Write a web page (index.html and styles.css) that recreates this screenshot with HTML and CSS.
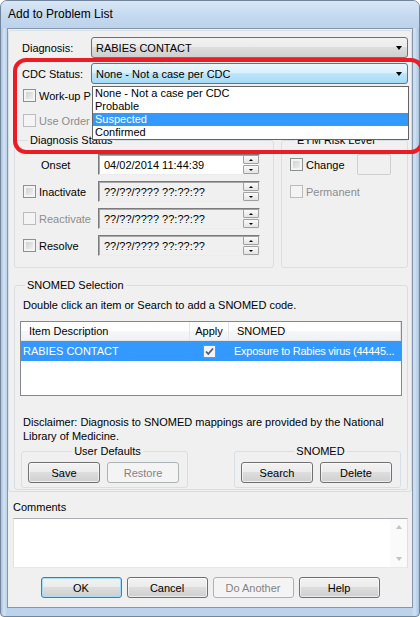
FILE: index.html
```html
<!doctype html>
<html>
<head>
	<meta charset="utf-8">
	<title>Add to Problem List</title>
	<link rel="stylesheet" href="styles.css">
</head>
<body>
<div class="window">
	<div class="titlebar">Add to Problem List</div>

	<div class="client">
		<div class="main-group">
			<div class="field-row">
				<label>Diagnosis:</label>
				<div class="combo"><span>RABIES CONTACT</span><i class="arrow"></i></div>
			</div>
			<div class="field-row">
				<label>CDC Status:</label>
				<div class="combo hot"><span>None - Not a case per CDC</span><i class="arrow"></i></div>
			</div>

			<div class="check-row"><span class="check"></span><span class="cut">Work-up P</span></div>
			<div class="check-row second disabled"><span class="check"></span><span class="cut">Use Order</span></div>

			<div class="status-groups">
				<fieldset class="group status">
					<legend>Diagnosis Status</legend>
					<div class="date-row">
						<span class="date-label plain">Onset</span>
						<div class="datebox active">04/02/2014 11:44:39<span class="spin"><span class="up"></span><span class="down"></span></span></div>
					</div>
					<div class="date-row">
						<span class="date-label"><span class="check"></span>Inactivate</span>
						<div class="datebox">??/??/???? ??:??:??<span class="spin"><span class="up"></span><span class="down"></span></span></div>
					</div>
					<div class="date-row">
						<span class="date-label disabled"><span class="check"></span>Reactivate</span>
						<div class="datebox">??/??/???? ??:??:??<span class="spin"><span class="up"></span><span class="down"></span></span></div>
					</div>
					<div class="date-row">
						<span class="date-label"><span class="check"></span>Resolve</span>
						<div class="datebox">??/??/???? ??:??:??<span class="spin"><span class="up"></span><span class="down"></span></span></div>
					</div>
				</fieldset>

				<fieldset class="group risk">
					<legend>EYM Risk Level</legend>
					<div class="risk-row">
						<span class="date-label"><span class="check"></span>Change</span>
						<span class="small-box"></span>
					</div>
					<div class="risk-row">
						<span class="date-label disabled"><span class="check"></span>Permanent</span>
					</div>
				</fieldset>
			</div>

			<fieldset class="group snomed">
				<legend>SNOMED Selection</legend>
				<p class="hint">Double click an item or Search to add a SNOMED code.</p>

				<div class="listview">
					<div class="lv-head">
						<span>Item Description</span>
						<span class="center">Apply</span>
						<span>SNOMED</span>
					</div>
					<div class="lv-row">
						<span class="first">RABIES CONTACT</span>
						<span class="center"><span class="check checked"><svg width="11" height="11" viewBox="0 0 11 11"><path d="M2 5.5 L4.3 8 L9 2.5" fill="none" stroke="#4d5c73" stroke-width="1.8"/></svg></span></span>
						<span class="last">Exposure to Rabies virus (44445...</span>
					</div>
				</div>

				<p class="disclaimer">Disclaimer: Diagnosis to SNOMED mappings are provided by the National Library of Medicine.</p>

				<div class="sub-groups">
					<fieldset class="group sub">
						<legend>User Defaults</legend>
						<div class="sub-buttons">
							<button class="btn">Save</button>
							<button class="btn" disabled>Restore</button>
						</div>
					</fieldset>
					<fieldset class="group sub">
						<legend>SNOMED</legend>
						<div class="sub-buttons">
							<button class="btn">Search</button>
							<button class="btn">Delete</button>
						</div>
					</fieldset>
				</div>
			</fieldset>
		</div>

		<div class="comments">
			<label>Comments</label>
			<div class="memo">
				<span class="memo-text"></span>
				<span class="scroll"><i class="s-up"></i><i class="s-down"></i></span>
			</div>
		</div>

		<div class="buttons">
			<button class="btn wide default">OK</button>
			<button class="btn wide">Cancel</button>
			<button class="btn wide" disabled>Do Another</button>
			<button class="btn wide">Help</button>
		</div>
	</div>

	<!-- open list of the CDC Status combo -->
	<ul class="dropdown">
		<li>None - Not a case per CDC</li>
		<li>Probable</li>
		<li class="selected">Suspected</li>
		<li>Confirmed</li>
	</ul>

	<!-- red highlight drawn over the screenshot -->
	<div class="callout"></div>
</div>
</body>
</html>
```

FILE: styles.css
```css
body {
	margin: 0;
	font-family: "Liberation Sans", Arial, sans-serif;
	font-size: 11px;
	color: #000;
	background: #fff;
}
p {
	margin: 0;
}
button {
	font-family: inherit;
	font-size: 11px;
	font-weight: normal;
}
.window {
	position: relative;
	width: 420px;
	height: 617px;
	box-sizing: border-box;
	padding: 0 6px 8px 6px;
	border: 1px solid #71869d;
	border-radius: 7px 7px 4px 4px;
	background: linear-gradient(90deg, #a9c3de 0, #d2e2f3 3px, #bcd3eb 6px, #bcd3eb 410px, #d0e1f2 414px, #a9c3de 100%);
}
.titlebar {
	height: 27px;
	margin: 0 -6px;
	padding-left: 7px;
	line-height: 27px;
	font-size: 12px;
	border-radius: 6px 6px 0 0;
	background: linear-gradient(#d9e7f5, #c3d8ee 60%, #bcd3eb);
}
.client {
	height: 580px;
	box-sizing: border-box;
	border: 1px solid #8497ad;
	background: #f0f0f0;
}

/* outer group box */
.main-group {
	margin-top: 1px;
	padding: 6px 0 1px 0;
	border: 1px solid #d5dfe5;
	border-radius: 3px;
}
.field-row {
	display: grid;
	grid-template-columns: 69px 317px;
	align-items: center;
	padding-left: 13px;
	margin-bottom: 5px;
}
.combo {
	position: relative;
	display: flex;
	align-items: center;
	height: 21px;
	box-sizing: border-box;
	padding-left: 4px;
	border: 1px solid #707070;
	border-radius: 3px;
	background: linear-gradient(#f2f2f2, #ebebeb 50%, #dddddd 50%, #cfcfcf);
}
.combo.hot {
	border-color: #3c7fb1;
	background: linear-gradient(#eaf6fd, #d9f0fc 50%, #bee6fd 50%, #a7d9f5);
}
.arrow {
	margin-left: auto;
	margin-right: 5px;
	border-left: 3px solid transparent;
	border-right: 3px solid transparent;
	border-top: 4px solid #000;
}
.check {
	display: inline-block;
	flex: none;
	width: 13px;
	height: 13px;
	box-sizing: border-box;
	border: 1px solid #8e8f8f;
	background: linear-gradient(135deg, #c6cacf, #f6f6f6);
	box-shadow: inset 0 0 0 2px #f4f4f4;
}
.check.checked {
	background: #f4f4f4;
	box-shadow: none;
	border-color: #8e8f8f;
}
.check.checked svg {
	display: block;
}
.disabled {
	color: #8d8d8d;
}
.disabled .check {
	border-color: #bcbcbc;
	background: #f4f4f4;
	box-shadow: none;
}
.check-row {
	display: flex;
	align-items: center;
	gap: 3px;
	height: 13px;
	margin-top: 1px;
	padding-left: 14px;
}
.check-row.second {
	margin-top: 12px;
}
.cut {
	white-space: nowrap;
}

/* group boxes */
.group {
	min-width: 0;
	margin: 0;
	padding: 0;
	border: 1px solid #d5dfe5;
	border-radius: 3px;
}
.group legend {
	margin-left: 5px;
	padding: 0 2px;
	line-height: 13px;
}
.status-groups {
	display: grid;
	grid-template-columns: 260px 127px;
	column-gap: 7px;
	margin-top: 7px;
	padding-left: 5px;
}
.status {
	padding: 7px 0 11px 8px;
}
.date-row {
	display: grid;
	grid-template-columns: 75px 162px;
	align-items: center;
	height: 21px;
	margin-bottom: 6px;
}
.date-row:last-child {
	margin-bottom: 0;
}
.date-label {
	display: flex;
	align-items: center;
	gap: 3px;
}
.date-label.plain {
	padding-left: 18px;
}
.datebox {
	display: flex;
	align-items: center;
	height: 21px;
	box-sizing: border-box;
	padding-left: 5px;
	border: 1px solid;
	border-color: #7b7b7b #ececec #ececec #7b7b7b;
	box-shadow: inset 1px 1px 0 #a8a8a8;
	background: #f0f0f0;
}
.datebox.active {
	background: #fff;
}
.spin {
	display: flex;
	flex-direction: column;
	gap: 1px;
	width: 16px;
	height: 19px;
	margin-left: auto;
}
.spin span {
	flex: 1;
	display: flex;
	align-items: center;
	justify-content: center;
	border: 1px solid #a0a0a0;
	border-radius: 1px;
	background: linear-gradient(#fafafa, #e4e4e4);
}
.spin .up::after {
	content: "";
	border-left: 2px solid transparent;
	border-right: 2px solid transparent;
	border-bottom: 2px solid #000;
}
.spin .down::after {
	content: "";
	border-left: 2px solid transparent;
	border-right: 2px solid transparent;
	border-top: 2px solid #000;
}
.risk {
	padding: 7px 0 0 8px;
}
.risk-row {
	display: grid;
	grid-template-columns: 67px 34px;
	align-items: center;
	height: 21px;
	margin-bottom: 6px;
}
.small-box {
	height: 21px;
	box-sizing: border-box;
	border: 1px solid #cfcfcf;
	border-radius: 2px;
	background: #f0f0f0;
}

/* SNOMED selection */
.snomed {
	margin: 11px 3px 0 5px;
	padding: 7px 5px 1px 5px;
}
.hint {
	padding-left: 3px;
	line-height: 13px;
}
.listview {
	height: 75px;
	margin-top: 9px;
	box-sizing: border-box;
	border: 1px solid #828790;
	background: #fff;
}
.lv-head, .lv-row {
	display: grid;
	grid-template-columns: 169px 39px 1fr;
}
.lv-head {
	height: 19px;
	box-sizing: border-box;
	border-bottom: 1px solid #e5e5e5;
	background: linear-gradient(#fff, #fff 50%, #f6f7f9 50%, #f0f1f3);
}
.lv-head span {
	line-height: 18px;
	padding-left: 8px;
	border-right: 1px solid #e3e6ea;
	white-space: nowrap;
}
.lv-head .center {
	padding-left: 0;
	text-align: center;
}
.lv-row {
	height: 20px;
	line-height: 20px;
	background: #3399ff;
	color: #fff;
}
.lv-row .first {
	padding-left: 2px;
}
.lv-row .center {
	display: flex;
	align-items: center;
	justify-content: center;
}
.lv-row .last {
	padding-left: 5px;
	white-space: nowrap;
	letter-spacing: -0.25px;
}
.disclaimer {
	margin-top: 19px;
	padding-left: 3px;
	line-height: 14px;
}
.sub-groups {
	display: grid;
	grid-template-columns: 167px 167px;
	column-gap: 46px;
	margin-top: 2px;
	padding-left: 1px;
}
.sub {
	padding: 4px 0 4px 6px;
}
.sub legend {
	margin: 0 auto;
}
.sub-buttons {
	display: flex;
	gap: 7px;
}

/* buttons */
.btn {
	width: 72px;
	height: 21px;
	padding: 0;
	border: 1px solid #707070;
	border-radius: 3px;
	color: #000;
	background: linear-gradient(#f2f2f2, #ebebeb 50%, #dddddd 50%, #cfcfcf);
	box-shadow: inset 0 0 0 1px rgba(255, 255, 255, 0.6);
}
.btn:disabled {
	border-color: #adb2b5;
	background: #f4f4f4;
	color: #838383;
	box-shadow: none;
}
.btn.default {
	border-color: #3c7fb1;
	box-shadow: inset 0 0 0 1px #a6dcf6;
}
.btn.wide {
	width: 81px;
}

/* comments */
.comments {
	margin-top: 9px;
	padding-left: 5px;
}
.comments label {
	display: block;
	line-height: 13px;
}
.memo {
	display: flex;
	width: 395px;
	height: 50px;
	margin-top: 4px;
	box-sizing: border-box;
	border: 1px solid #abadb3;
	border-color: #abadb3 #dbdfe6 #e3e9ef #e2e3ea;
	background: #fff;
}
.memo-text {
	flex: 1;
}
.scroll {
	display: flex;
	flex-direction: column;
	justify-content: space-between;
	align-items: center;
	width: 17px;
	padding: 6px 0;
	box-sizing: border-box;
	background: #fafafa;
}
.s-up {
	border-left: 3px solid transparent;
	border-right: 3px solid transparent;
	border-bottom: 4px solid #c2c2c2;
}
.s-down {
	border-left: 3px solid transparent;
	border-right: 3px solid transparent;
	border-top: 4px solid #c2c2c2;
}
.buttons {
	display: flex;
	justify-content: center;
	gap: 5px;
	margin-top: 9px;
}

/* overlays */
.dropdown {
	position: absolute;
	left: 91px;
	top: 85px;
	width: 317px;
	box-sizing: border-box;
	margin: 0;
	padding: 0;
	list-style: none;
	border: 1px solid #646464;
	background: #fff;
}
.dropdown li {
	height: 13px;
	line-height: 13px;
	padding-left: 2px;
}
.dropdown li.selected {
	background: #3399ff;
	color: #fff;
}
.callout {
	position: absolute;
	left: 12px;
	top: 57px;
	width: 403px;
	height: 88px;
	border: 4px solid #ec1c24;
	border-radius: 13px;
}
```
